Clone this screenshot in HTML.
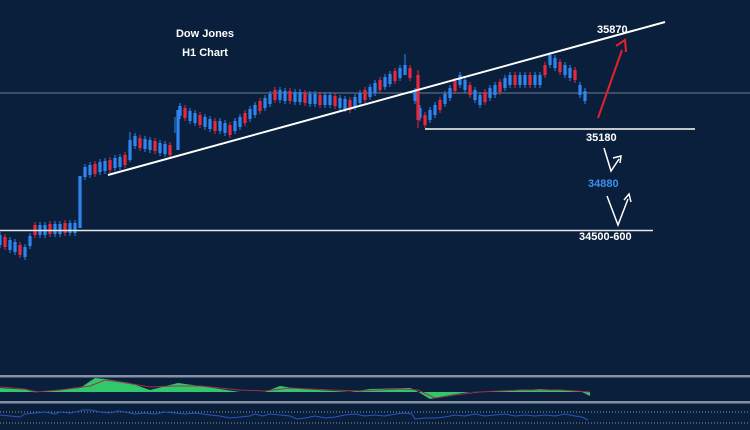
<!DOCTYPE html>
<html><head><meta charset="utf-8"><style>
html,body{margin:0;padding:0;background:#0a1f3b;}
svg{display:block}
text{font-family:"Liberation Sans",sans-serif;font-weight:bold;font-size:11px;fill:#fff}
</style></head><body>
<svg width="750" height="430" viewBox="0 0 750 430">
<rect width="750" height="430" fill="#0a1f3b"/>
<line x1="0" y1="93" x2="750" y2="93" stroke="#6f7d92" stroke-width="1"/>
<path fill="none" stroke="#2f86f0" stroke-width="1" d="M0,232v16M10,237v16M15,239v16M25,244v16M30,233v16M40,222v16M45,222v16M55,221v16M60,221v16M70,220v16M75,220v16M85,164v16M90,162v16M100,159v16M105,158v16M115,155v16M120,154v16M130,132v30M135,133v16M145,136v16M150,137v16M160,140v16M165,141v16M175,117v16M180,103v16M190,108v16M195,110v16M205,114v16M210,116v16M220,118v16M225,120v16M235,118v16M240,114v16M250,106v16M255,102v16M265,95v16M270,91v16M280,87v16M285,88v16M295,89v16M300,89v16M310,91v16M315,91v16M325,92v16M330,92v16M340,95v16M345,96v16M355,94v16M360,90v16M370,84v16M375,80v16M385,74v16M390,71v16M400,65v16M405,54v20M415,88v16M420,105v16M430,107v16M435,102v16M445,91v16M450,85v16M460,72v16M465,77v16M475,87v16M480,92v16M490,85v16M495,82v16M505,75v16M510,72v16M520,72v16M525,72v16M535,72v16M540,72v16M550,52v16M555,55v16M565,62v16M570,65v16M580,82v16M585,88v16"/>
<path fill="none" stroke="#e8283c" stroke-width="1" d="M5,234v16M20,242v16M35,222v16M50,221v16M65,220v16M95,161v16M110,157v16M125,152v16M140,135v16M155,138v16M170,142v16M185,105v16M200,112v16M215,118v16M230,122v16M245,110v16M260,98v16M275,87v16M290,88v16M305,90v16M320,92v16M335,93v16M350,97v16M365,87v16M380,77v16M395,68v16M410,65v16M418,70v58M425,112v16M440,97v16M455,78v16M470,82v16M485,89v16M500,79v16M515,72v16M530,72v16M545,62v16M560,59v16M575,67v16"/>
<path fill="none" stroke="#2f86f0" stroke-width="3.2" d="M0,235v10M10,240v10M15,242v10M25,247v10M30,236v10M40,225v10M45,225v10M55,224v10M60,224v10M70,223v10M75,223v10M80,176v52M85,167v10M90,165v10M100,162v10M105,161v10M115,158v10M120,157v10M130,140v20M135,136v10M145,139v10M150,140v10M160,143v10M165,144v10M178,110v40M180,106v10M190,111v10M195,113v10M205,117v10M210,119v10M220,121v10M225,123v10M235,121v10M240,117v10M250,109v10M255,105v10M265,98v10M270,94v10M280,90v10M285,91v10M295,92v10M300,92v10M310,94v10M315,94v10M325,95v10M330,95v10M340,98v10M345,99v10M355,97v10M360,93v10M370,87v10M375,83v10M385,77v10M390,74v10M400,68v10M405,65v10M415,91v10M420,108v10M430,110v10M435,105v10M445,94v10M450,88v10M460,75v10M465,80v10M475,90v10M480,95v10M490,88v10M495,85v10M505,78v10M510,75v10M520,75v10M525,75v10M535,75v10M540,75v10M550,55v10M555,58v10M565,65v10M570,68v10M580,85v10M585,91v10"/>
<path fill="none" stroke="#e8283c" stroke-width="3.2" d="M5,237v10M20,245v10M35,225v10M50,224v10M65,223v10M95,164v10M110,160v10M125,155v10M140,138v10M155,141v10M170,145v10M185,108v10M200,115v10M215,121v10M230,125v10M245,113v10M260,101v10M275,90v10M290,91v10M305,93v10M320,95v10M335,96v10M350,100v10M365,90v10M380,80v10M395,71v10M410,68v10M418,75v45M425,115v10M440,100v10M455,81v10M470,85v10M485,92v10M500,82v10M515,75v10M530,75v10M545,65v10M560,62v10M575,70v10"/>
<line x1="108" y1="175" x2="665" y2="22" stroke="#fff" stroke-width="2"/>
<line x1="425" y1="129" x2="695" y2="129" stroke="#fff" stroke-width="1.5"/>
<line x1="0" y1="230.5" x2="653" y2="230.5" stroke="#e8e8e8" stroke-width="1.5"/>
<text x="205" y="37" text-anchor="middle" font-size="12">Dow Jones</text>
<text x="205" y="56" text-anchor="middle" font-size="12">H1 Chart</text>
<text x="597" y="33">35870</text>
<text x="586" y="141">35180</text>
<text x="588" y="187" style="fill:#3d8ff0">34880</text>
<text x="579" y="240">34500-600</text>
<line x1="598" y1="118" x2="622" y2="50" stroke="#e8202a" stroke-width="2"/>
<path d="M616,46 L625,40 L626,52" fill="none" stroke="#e8202a" stroke-width="2"/>
<path d="M604,148 L611,171 L619,159" fill="none" stroke="#fff" stroke-width="1.5"/>
<path d="M613,158 L621,156 L620,163" fill="none" stroke="#fff" stroke-width="1.5"/>
<path d="M607,196 L618,225 L628,199" fill="none" stroke="#fff" stroke-width="1.5"/>
<path d="M624,200 L629,194 L631,202" fill="none" stroke="#fff" stroke-width="1.5"/>
<rect x="0" y="375" width="750" height="2.5" fill="#8590a2"/>
<rect x="0" y="401" width="750" height="2.5" fill="#8590a2"/>
<polygon fill="#2fc86a" points="0,392 0,388 30,390 40,392 80,388 95,378 105,379 130,383 150,390 178,383 200,386 240,392 265,392 280,386 300,389 350,392 370,389 410,388 415,390 430,399 450,395 470,392 510,391 540,389 580,391 590,396 590,392"/>
<polyline fill="none" stroke="#a0304a" stroke-width="1" points="0,387 25,389 35,392 60,390 90,386 105,380 120,382 150,387 175,386 200,386 240,390 265,391 290,388 330,390 360,391 400,389 418,390 435,398 455,395 480,392 520,390 560,390 590,392"/>
<line x1="0" y1="412" x2="750" y2="412" stroke="#8590a2" stroke-dasharray="1,2" stroke-width="1"/>
<line x1="0" y1="423" x2="750" y2="423" stroke="#8590a2" stroke-dasharray="1,2" stroke-width="1"/>
<polyline fill="none" stroke="#2a55b8" stroke-width="1" points="0,415 10,416 20,417 25,414 35,413 45,412 55,414 60,412 70,413 80,411 82,410 90,410 100,412 110,413 118,411 125,412 135,414 145,413 155,414 165,412 175,413 185,414 195,413 210,415 220,416 230,418 240,417 250,416 255,414 262,416 270,414 280,415 290,416 297,419 305,418 315,416 325,418 335,417 345,415 355,414 365,416 375,415 385,416 395,414 405,413 412,414 415,419 425,418 435,418 445,417 455,415 465,416 475,414 485,416 495,415 505,414 515,416 525,415 535,416 545,415 555,416 565,414 575,416 582,417 588,420"/>
</svg>
</body></html>
